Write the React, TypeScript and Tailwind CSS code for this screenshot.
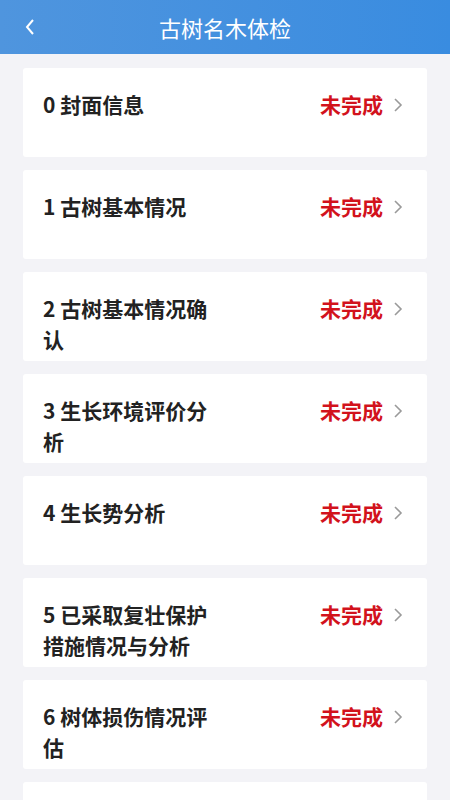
import React from 'react';

const items = [
  '0 封面信息',
  '1 古树基本情况',
  '2 古树基本情况确认',
  '3 生长环境评价分析',
  '4 生长势分析',
  '5 已采取复壮保护措施情况与分析',
  '6 树体损伤情况评估',
];

const Row: React.FC<{ title: string }> = ({ title }) => (
  <div className="bg-white rounded-[3px] h-[89px] shrink-0 flex items-start pl-[20px] pr-[24px] pt-[21px]">
    <div className="w-[178px] text-[21px] leading-[31px] font-bold text-[#222222]">{title}</div>
    <div className="ml-auto flex items-center h-[31px]">
      <span className="text-[21px] font-bold text-[#d2121c]">未完成</span>
      <svg width="10" height="16" viewBox="0 0 10 16" className="ml-[10px]">
        <path d="M2 2 L8 8 L2 14" fill="none" stroke="#9a9a9a" strokeWidth="1.6" />
      </svg>
    </div>
  </div>
);

export default function App() {
  return (
    <div
      className="w-[450px] h-[800px] overflow-hidden bg-[#f3f3f7] flex flex-col"
      style={{ fontFamily: '"Noto Sans CJK SC", "Noto Sans", sans-serif' }}
    >
      <div className="h-[54px] shrink-0 bg-gradient-to-r from-[#4f95de] to-[#398ce0] flex items-center relative">
        <svg width="12" height="18" viewBox="0 0 12 18" className="absolute left-[24px] top-[18px]">
          <path d="M9 2 L3 9 L9 16" fill="none" stroke="#ffffff" strokeWidth="2" />
        </svg>
        <div className="flex-1 text-center text-white text-[22px]">古树名木体检</div>
      </div>
      <div className="flex flex-col gap-[13px] px-[23px] pt-[14px]">
        {items.map((t) => (
          <Row key={t} title={t} />
        ))}
        <div className="bg-white rounded-[3px] h-[89px] shrink-0" />
      </div>
    </div>
  );
}
